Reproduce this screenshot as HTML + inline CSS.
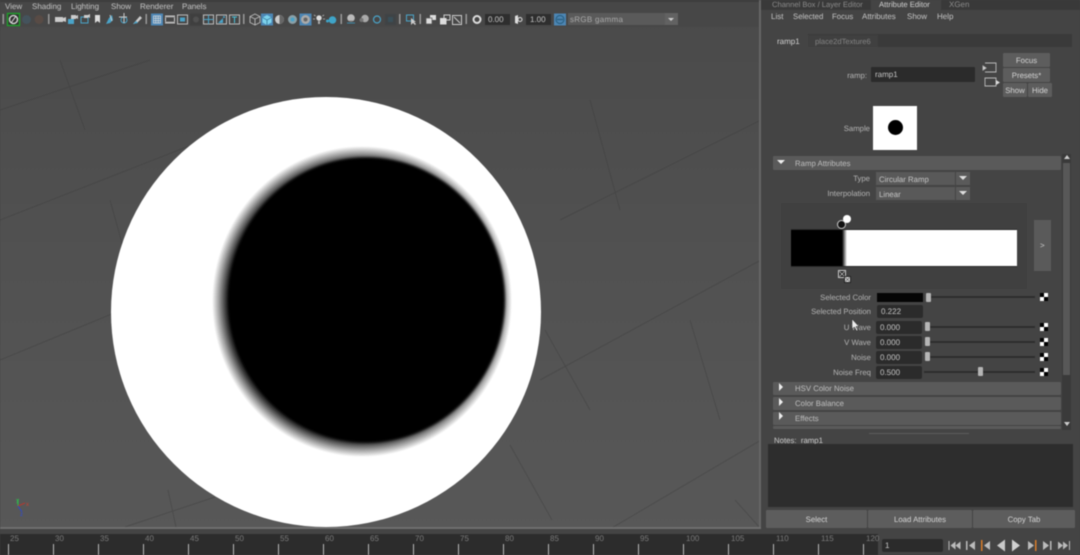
<!DOCTYPE html>
<html><head><meta charset="utf-8"><style>
html,body{margin:0;padding:0;width:1080px;height:555px;overflow:hidden;background:#444}
body{position:relative;font-family:"Liberation Sans",sans-serif;font-size:8px;color:#c4c4c4;text-rendering:geometricPrecision}
div{position:absolute;box-sizing:border-box}
#w{left:0;top:0;width:1080px;height:555px;filter:blur(.4px);overflow:hidden}
.t{white-space:nowrap;line-height:10px}
.r{text-align:right;color:#b4b4b4;font-size:7.750px}
.f{background:#2b2b2b;border-radius:2px;color:#c4c4c4;padding-left:4px;line-height:14px;height:13px;width:46px;left:876px}
.s{height:2px;background:#2e2e2e;left:927px;width:108px}
.h{width:5px;height:9px;background:#b5b5b5;border-radius:1px}
.c{width:8px;height:8px;left:1040px;background:conic-gradient(#fff 0 25%,#000 0 50%,#fff 0 75%,#000 0)}
.b{background:#5d5d5d;text-align:center;color:#d4d4d4;border-radius:1px;font-size:7.800px}
.sec{left:773px;width:288px;height:13px;background:#5a5a5a;color:#bfbfbf;line-height:14px;padding-left:22px;border-radius:1px;font-size:7.800px}
.ar{width:0;height:0;border-left:4px solid #eee;border-top:4px solid transparent;border-bottom:4px solid transparent;left:779px}
.dd{width:14px;height:13px;background:#5a5a5a}
.dd:after{content:"";position:absolute;left:3px;top:4px;border-top:4px solid #ddd;border-left:4px solid transparent;border-right:4px solid transparent}
.sel{height:13px;background:#595959;color:#c6c6c6;padding-left:3px;line-height:15px;font-size:7.800px}
.tl{color:#7a7a7a;font-size:8px;top:534px;line-height:9px}
.tk{top:544px;width:1px;height:11px;background:#b8b8b8}
</style></head><body><div id="w">

<!-- viewport -->
<div style="left:0;top:0;width:761px;height:529px;background:linear-gradient(#4a4a4a,#505050 40%,#585858);overflow:hidden">
<svg width="761" height="529" style="position:absolute;left:0;top:0" fill="none">
<g stroke="#3a3a3a" stroke-width="1" opacity=".4">
<path d="M0 220L230 130M0 360L170 290M125 527L215 497M0 110L150 60M560 220L761 120M540 380L761 260M610 529L761 440"/>
<path d="M168 490L176 527M110 200L135 290M60 60L85 130M590 100L620 210M545 330L590 410M510 445L552 520M690 320L720 420M735 500L761 529"/>
</g>
<defs><radialGradient id="g" cx="0" cy="0" r="1" gradientUnits="userSpaceOnUse" gradientTransform="translate(362 301.500) scale(150 155.500)">
<stop offset=".87" stop-color="#000"/><stop offset=".91" stop-color="#3a3a3a"/><stop offset=".955" stop-color="#a0a0a0"/><stop offset="1" stop-color="#fff"/></radialGradient></defs>
<circle cx="326" cy="312" r="215" fill="#fff"/>
<ellipse cx="362" cy="301.500" rx="150" ry="155.500" fill="url(#g)"/>
<ellipse cx="366.500" cy="300" rx="138.500" ry="142.500" fill="#000" style="filter:blur(1.200px)"/>
<g stroke-width="1"><path d="M18 506V499" stroke="#2fb84a"/><path d="M18 506L25 503" stroke="#b5372f"/><path d="M18 506L22 512" stroke="#2d49c8"/></g>
<text x="16" y="502" font-size="6" fill="#2fc050" font-family="Liberation Sans">y</text>
<text x="26" y="506" font-size="6" fill="#c8402f" font-family="Liberation Sans">x</text>
<text x="20" y="516" font-size="6" fill="#2d49d8" font-family="Liberation Sans">z</text>
</svg>
<div style="left:0;top:0;width:761px;height:27px;background:#474747"></div>
<div style="left:0;top:0;width:761px;height:2px;background:#3d3d3d"></div>
<div style="left:0;bottom:0;width:761px;height:2px;background:#6a6a6a"></div>
<div style="right:0;top:0;width:2px;height:529px;background:#666"></div>
</div>
<div style="left:0;top:527px;width:761px;height:6px;background:#444;border-top:2px solid #6e6e6e"></div>

<!-- menu -->
<div class="t" style="left:5px;top:2px">View</div>
<div class="t" style="left:32px;top:2px">Shading</div>
<div class="t" style="left:71px;top:2px">Lighting</div>
<div class="t" style="left:111px;top:2px">Show</div>
<div class="t" style="left:140px;top:2px">Renderer</div>
<div class="t" style="left:182px;top:2px">Panels</div>

<!-- toolbar icons -->
<svg width="761" height="27" style="position:absolute;left:0;top:0" fill="none">
<rect x="2.500" y="14" width="1.500" height="10" fill="#999"/>
<rect x="7.500" y="13.500" width="12" height="12" fill="#333" stroke="#1fa02a" stroke-width="1.400"/>
<circle cx="13.500" cy="19.500" r="4" stroke="#ddd" stroke-width="1.300"/><path d="M11 23L16 16" stroke="#ddd"/>
<circle cx="26.500" cy="19.500" r="4.500" fill="#44535c"/><circle cx="39" cy="19.500" r="4.500" fill="#584b45"/>
<rect x="48" y="14" width="1.500" height="10" fill="#999"/>
<path d="M55 17h8v5h-8zM63 18l3-1v5l-3-1z" fill="#ccc"/>
<path d="M68 19h6v5h-6z" fill="#4aa3c8"/><path d="M71 15h5v4h-5zM76 16l2-1v4l-2-1z" fill="#ccc"/>
<path d="M81 17h7v6h-7z" stroke="#4aa3c8"/><path d="M84 15h4v3h-4zM88 15l2-1v4l-2-1z" fill="#ccc"/>
<path d="M95 15h5v8l-2.500-2-2.500 2z" fill="#ddd"/>
<path d="M106 24l3-6 3-3 1 5-3 3z" fill="#4aa3c8"/><path d="M110 15l2 6" stroke="#ccc"/>
<circle cx="124" cy="20" r="3" stroke="#4aa3c8"/><path d="M119 17h8M124 13v10" stroke="#ccc"/>
<path d="M133 24l7-8 2 2-5 5z" fill="#ccc"/><path d="M133 24l3-3 2 2z" fill="#4aa3c8"/>
<rect x="145.500" y="14" width="1.500" height="10" fill="#999"/>
<rect x="151" y="13.500" width="12" height="12" fill="#4d86b4"/><path d="M153.500 16h7v7h-7zM153.500 18.300h7M153.500 20.700h7M155.800 16v7M158.200 16v7" stroke="#ddd" stroke-width=".7"/>
<rect x="165.500" y="16" width="9" height="7" stroke="#ccc"/><path d="M165 17h10M165 22h10" stroke="#999"/>
<rect x="177.500" y="15" width="10" height="9" stroke="#bbb"/><rect x="180" y="17.500" width="5" height="4" fill="#4aa3c8"/>
<rect x="190" y="13.500" width="12" height="12" fill="#3f3f3f"/><circle cx="196" cy="19.500" r="3" fill="#505050"/>
<rect x="203.500" y="15" width="10" height="9" stroke="#bbb"/><path d="M208.500 15v9M203.500 19.500h10" stroke="#4aa3c8"/>
<rect x="216.500" y="15" width="10" height="9" stroke="#bbb"/><path d="M218 23l5-5v5z" fill="#4aa3c8"/><circle cx="224" cy="17" r="1" fill="#4aa3c8"/>
<rect x="229.500" y="15" width="10" height="9" stroke="#bbb"/><path d="M232 17h5M234.500 17v6" stroke="#4ac0d8"/>
<rect x="243" y="14" width="1.500" height="10" fill="#999"/>
<path d="M255 14l5 2.500v6L255 25l-5-2.500v-6zM250 16.500l5 2.500 5-2.500M255 19v6" stroke="#bbb" stroke-width=".9"/>
<rect x="261" y="13.500" width="12" height="12" fill="#4d86b4"/><path d="M267 15l4.500 2.500v5L267 25l-4.500-2.500v-5z" fill="#7cd2ec"/><path d="M262.500 17.500l4.500 2.500 4.500-2.500M267 20v5" stroke="#2a6c90" stroke-width=".7"/>
<circle cx="279.500" cy="19.500" r="4.500" fill="#ccc"/><path d="M279.500 15a4.500 4.500 0 0 1 0 9z" fill="#666"/>
<circle cx="292.500" cy="19.500" r="4.500" fill="#8aa0a8"/><circle cx="292.500" cy="19.500" r="2" fill="#4aa3c8"/>
<rect x="299.500" y="13.500" width="12" height="12" fill="#4d86b4"/><circle cx="305.500" cy="19.500" r="4.500" fill="#aaa"/><circle cx="305.500" cy="19.500" r="2" fill="#666"/>
<circle cx="319" cy="18" r="2.700" fill="#ddd"/><path d="M318 21h2v3h-2z" fill="#aaa"/><path d="M314 15l1.500 1M324 15l-1.500 1M313 19h2M323 19h2" stroke="#bbb" stroke-width=".8"/>
<circle cx="332.500" cy="20" r="3.800" fill="#3fa4c8"/><circle cx="327.500" cy="21" r="1.500" fill="#3fa4c8"/>
<rect x="340.500" y="14" width="1.500" height="10" fill="#999"/>
<circle cx="351" cy="18" r="3.800" fill="#bbb"/><path d="M347 23h8" stroke="#3f8aa8"/><path d="M349 21h4" stroke="#888"/>
<circle cx="365" cy="18.500" r="3.800" fill="#aaa"/><circle cx="361.500" cy="20" r="2" fill="#777"/>
<circle cx="377" cy="19.500" r="3.500" stroke="#4aa3c8" stroke-width="1.200"/>
<rect x="385" y="14" width="11" height="11" fill="#3f4345"/><rect x="388" y="17" width="5" height="5" fill="#3a4f58"/>
<rect x="399" y="14" width="1.500" height="10" fill="#999"/>
<rect x="406.500" y="15" width="7" height="6" stroke="#4aa3c8"/><path d="M411 18v7l2-2 2 2 1-1-2-2h2z" fill="#ccc"/>
<rect x="419.500" y="14" width="1.500" height="10" fill="#999"/>
<rect x="430" y="15" width="6" height="5" fill="#ddd"/><rect x="426" y="18" width="6" height="6" fill="#ddd" stroke="#555" stroke-width=".7"/>
<rect x="444" y="15" width="6" height="5" stroke="#ccc"/><rect x="440" y="18" width="6.500" height="6.500" fill="#ddd"/>
<rect x="452.500" y="15.500" width="9" height="9" stroke="#ccc"/><path d="M454 17l6 6" stroke="#ccc"/>
<rect x="465.500" y="14" width="1.500" height="10" fill="#999"/>
<circle cx="477" cy="19.500" r="3.500" stroke="#ddd" stroke-width="2"/>
<path d="M518 15v9l-3-1v-7z" fill="#ddd"/><circle cx="520" cy="19.500" r="2" stroke="#ddd"/>
<rect x="554" y="13.500" width="12" height="12" fill="#4d86b4"/><circle cx="560" cy="19.500" r="4" stroke="#2b6285" stroke-width="1.200"/><path d="M557 19.500h6" stroke="#2b6285" stroke-width="1.500"/>
</svg>
<div class="t" style="left:485px;top:14px;width:25px;height:11px;background:#2e2e2e;padding-left:3px;line-height:12px">0.00</div>
<div class="t" style="left:526px;top:14px;width:25px;height:11px;background:#2e2e2e;padding-left:4px;line-height:12px">1.00</div>
<div class="t" style="left:568px;top:13px;width:110px;height:12px;background:#5a5a5a;padding-left:2px;line-height:14px;color:#aaa;letter-spacing:.3px">sRGB gamma</div>
<div style="left:665px;top:13px;width:13px;height:12px;background:#626262"></div>
<div style="left:668px;top:18px;border-top:3px solid #ccc;border-left:3.500px solid transparent;border-right:3.500px solid transparent"></div>

<!-- right panel -->
<div style="left:761px;top:0;width:319px;height:533px;background:#444"></div>
<div style="left:761px;top:0;width:319px;height:10px;background:#393939"></div>
<div style="left:871px;top:0;width:70px;height:10px;background:#444"></div>
<div class="t" style="left:772px;top:0;color:#8b8b8b;font-size:7.600px">Channel Box / Layer Editor</div>
<div class="t" style="left:879px;top:0;color:#d2d2d2;font-size:7.700px">Attribute Editor</div>
<div class="t" style="left:949px;top:0;color:#8b8b8b">XGen</div>
<div class="t" style="left:771px;top:12px">List</div>
<div class="t" style="left:793px;top:12px;font-size:7.800px">Selected</div>
<div class="t" style="left:832px;top:12px;font-size:7.800px">Focus</div>
<div class="t" style="left:862px;top:12px">Attributes</div>
<div class="t" style="left:907px;top:12px">Show</div>
<div class="t" style="left:937px;top:12px">Help</div>

<div style="left:770px;top:34px;width:302px;height:13px;background:#3a3a3a"></div>
<div style="left:770px;top:34px;width:38px;height:13px;background:#444"></div>
<div class="t" style="left:777px;top:37px;color:#d0d0d0">ramp1</div>
<div style="left:808px;top:35px;width:70px;height:12px;background:#404040"></div>
<div class="t" style="left:815px;top:37px;color:#858585;font-size:7.600px">place2dTexture6</div>

<div class="t r" style="left:820px;top:71px;width:47px">ramp:</div>
<div class="t" style="left:871px;top:67px;width:104px;height:15px;background:#2b2b2b;padding-left:4px;line-height:16px;border-radius:1px">ramp1</div>
<svg width="30" height="40" style="position:absolute;left:982px;top:58px" fill="none" stroke="#bbb" stroke-width=".9"><path d="M3 5h11v9H3"/><path d="M1 8l3 2-3 2z" fill="#ddd"/><path d="M3 20h11v8H3z"/><path d="M14 22l4 2.500-4 2.500z" fill="#ddd" stroke="none"/></svg>
<div class="b t" style="left:1003px;top:53px;width:47px;height:14px;line-height:15px">Focus</div>
<div class="b t" style="left:1003px;top:68px;width:47px;height:14px;line-height:15px">Presets*</div>
<div class="b t" style="left:1003px;top:83px;width:24px;height:14px;line-height:15px">Show</div>
<div class="b t" style="left:1028px;top:83px;width:24px;height:14px;line-height:15px">Hide</div>

<div class="t r" style="left:830px;top:124px;width:40px">Sample</div>
<div style="left:873px;top:106px;width:44px;height:44px;background:#fff"></div>
<div style="left:887.500px;top:120px;width:15px;height:15px;border-radius:50%;background:#000"></div>

<!-- scrollbar -->
<div style="left:1062px;top:154px;width:9px;height:276px;background:#3a3a3a"></div>
<div style="left:1063px;top:163px;width:7px;height:212px;background:#585858"></div>
<div style="left:1063.500px;top:155px;border-bottom:4px solid #ccc;border-left:3px solid transparent;border-right:3px solid transparent"></div>
<div style="left:1063.500px;top:422px;border-top:4px solid #ccc;border-left:3px solid transparent;border-right:3px solid transparent"></div>

<!-- ramp attrs -->
<div class="sec t" style="top:156px;height:14px;line-height:15px">Ramp Attributes</div>
<div style="left:777px;top:160px;border-top:4px solid #eee;border-left:4px solid transparent;border-right:4px solid transparent"></div>
<div class="t r" style="left:820px;top:174px;width:50px">Type</div>
<div class="t r" style="left:790px;top:189px;width:80px">Interpolation</div>
<div class="sel t" style="left:876px;top:172px;width:79px">Circular Ramp</div><div class="dd" style="left:956px;top:172px"></div>
<div class="sel t" style="left:876px;top:187px;width:79px">Linear</div><div class="dd" style="left:956px;top:187px"></div>

<div style="left:781px;top:203px;width:246px;height:86px;background:#404040"></div>
<div style="left:791px;top:229px;width:226px;height:38px;background:linear-gradient(90deg,#000 0,#000 51px,#fff 56px,#fff);border:1px solid #2a2a2a;border-width:1px 0"></div>
<div style="left:1034px;top:220px;width:17px;height:51px;background:#5a5a5a"></div>
<div class="t" style="left:1040px;top:241px;color:#ccc">&gt;</div>
<div style="left:837px;top:220px;width:9px;height:9px;border-radius:50%;background:#111;border:1px solid #ccc"></div>
<div style="left:843px;top:215px;width:8px;height:8px;border-radius:50%;background:#fff"></div>
<svg width="16" height="16" style="position:absolute;left:837px;top:269px" fill="none"><rect x="1.500" y="1.500" width="7" height="7" fill="#222" stroke="#ccc"/><path d="M2.500 2.500l5 5M7.500 2.500l-5 5" stroke="#ccc" stroke-width=".7"/><rect x="7.500" y="7.500" width="6" height="6" fill="#ddd" stroke="#222"/><path d="M8.500 8.500l4 4M12.500 8.500l-4 4" stroke="#555" stroke-width=".7"/></svg>

<div class="t r" style="left:790px;top:293px;width:81px">Selected Color</div>
<div style="left:877px;top:293px;width:46px;height:9px;background:#050505"></div>
<div class="s" style="left:930px;top:296px;width:105px"></div><div class="h" style="left:926px;top:293px"></div><div class="c" style="top:293px"></div>
<div class="t r" style="left:790px;top:307px;width:81px">Selected Position</div>
<div class="f" style="top:305px;left:877px">0.222</div>
<div class="t r" style="left:810px;top:323px;width:61px">U Wave</div>
<div class="f" style="top:321px">0.000</div><div class="s" style="top:326px"></div><div class="h" style="left:925px;top:322px"></div><div class="c" style="top:323px"></div>
<div class="t r" style="left:810px;top:338px;width:61px">V Wave</div>
<div class="f" style="top:336px">0.000</div><div class="s" style="top:341px"></div><div class="h" style="left:925px;top:337px"></div><div class="c" style="top:338px"></div>
<div class="t r" style="left:810px;top:353px;width:61px">Noise</div>
<div class="f" style="top:351px">0.000</div><div class="s" style="top:356px"></div><div class="h" style="left:925px;top:352px"></div><div class="c" style="top:353px"></div>
<div class="t r" style="left:810px;top:368px;width:61px">Noise Freq</div>
<div class="f" style="top:366px">0.500</div><div class="s" style="top:371px;left:924px;width:111px"></div><div class="h" style="left:978px;top:367px"></div><div class="c" style="top:368px"></div>
<svg width="10" height="14" style="position:absolute;left:851px;top:318px"><path d="M1 1v10l2.500-2 2 4 1.500-.8-2-3.700h3z" fill="#eee" stroke="#222" stroke-width=".5"/></svg>

<div class="sec t" style="top:382px;height:13px">HSV Color Noise</div><div class="ar" style="top:383px"></div>
<div class="sec t" style="top:397px;height:13px">Color Balance</div><div class="ar" style="top:398px"></div>
<div class="sec t" style="top:412px;height:13px">Effects</div><div class="ar" style="top:412px"></div>
<div class="sec" style="top:426px;height:3px"></div>
<div style="left:869px;top:433px;width:100px;height:1px;background:#5c5c5c"></div>

<div class="t" style="left:774px;top:436px;color:#ccc;font-size:7.800px">Notes:&nbsp; ramp1</div>
<div style="left:768px;top:444px;width:305px;height:63px;background:#2d2d2d"></div>
<div class="b t" style="left:766px;top:510px;width:101px;height:18px;line-height:19px">Select</div>
<div class="b t" style="left:868px;top:510px;width:104px;height:18px;line-height:19px">Load Attributes</div>
<div class="b t" style="left:973px;top:510px;width:102px;height:18px;line-height:19px">Copy Tab</div>

<!-- timeline -->
<div style="left:0;top:533px;width:1080px;height:22px;background:#444"></div>
<div style="left:0;top:534px;width:878px;height:21px;background:#2c2c2c"></div>
<div class="tl" style="left:10px">25</div><div class="tk" style="left:8px"></div>
<div class="tl" style="left:55px">30</div><div class="tk" style="left:53px"></div>
<div class="tl" style="left:100px">35</div><div class="tk" style="left:98px"></div>
<div class="tl" style="left:145px">40</div><div class="tk" style="left:143px"></div>
<div class="tl" style="left:190px">45</div><div class="tk" style="left:188px"></div>
<div class="tl" style="left:235px">50</div><div class="tk" style="left:233px"></div>
<div class="tl" style="left:280px">55</div><div class="tk" style="left:278px"></div>
<div class="tl" style="left:325px">60</div><div class="tk" style="left:323px"></div>
<div class="tl" style="left:370px">65</div><div class="tk" style="left:368px"></div>
<div class="tl" style="left:415px">70</div><div class="tk" style="left:413px"></div>
<div class="tl" style="left:460px">75</div><div class="tk" style="left:458px"></div>
<div class="tl" style="left:505px">80</div><div class="tk" style="left:503px"></div>
<div class="tl" style="left:550px">85</div><div class="tk" style="left:548px"></div>
<div class="tl" style="left:595px">90</div><div class="tk" style="left:593px"></div>
<div class="tl" style="left:640px">95</div><div class="tk" style="left:638px"></div>
<div class="tl" style="left:686px">100</div><div class="tk" style="left:683px"></div>
<div class="tl" style="left:731px">105</div><div class="tk" style="left:728px"></div>
<div class="tl" style="left:776px">110</div><div class="tk" style="left:773px"></div>
<div class="tl" style="left:821px">115</div><div class="tk" style="left:818px"></div>
<div class="tl" style="left:866px">120</div><div class="tk" style="left:863px"></div>

<div class="t" style="left:882px;top:539px;width:61px;height:13px;background:#2b2b2b;padding-left:3px;line-height:14px;color:#ccc;border-radius:2px">1</div>
<svg width="130" height="16" style="position:absolute;left:945px;top:538px" fill="#bbb">
<path d="M4 3h1v9H4zM6 7.500l5-4v8zM11 7.500l5-4v8z" transform="translate(-.5)"/>
<path d="M21 3h1.500v9H21zM24 7.500l6-4.500v9z"/>
<rect x="36" y="2" width="1.500" height="11" fill="#d87b2a"/><path d="M39 7.500l6-4.500v9z"/>
<path d="M52 7.500l8-6v12z" fill="#c8c8c8"/>
<path d="M67 1.500l8 6-8 6z" fill="#d0d0d0"/>
<path d="M83 3l6 4.500-6 4.500z"/><rect x="90" y="2" width="1.500" height="11" fill="#d87b2a"/>
<path d="M98 3l6 4.500-6 4.500zM105 3h1.500v9H105z"/>
<path d="M113 3.500l5 4-5 4zM118 3.500l5 4-5 4zM124 3h1v9h-1z"/>
</svg>
</div></body></html>
